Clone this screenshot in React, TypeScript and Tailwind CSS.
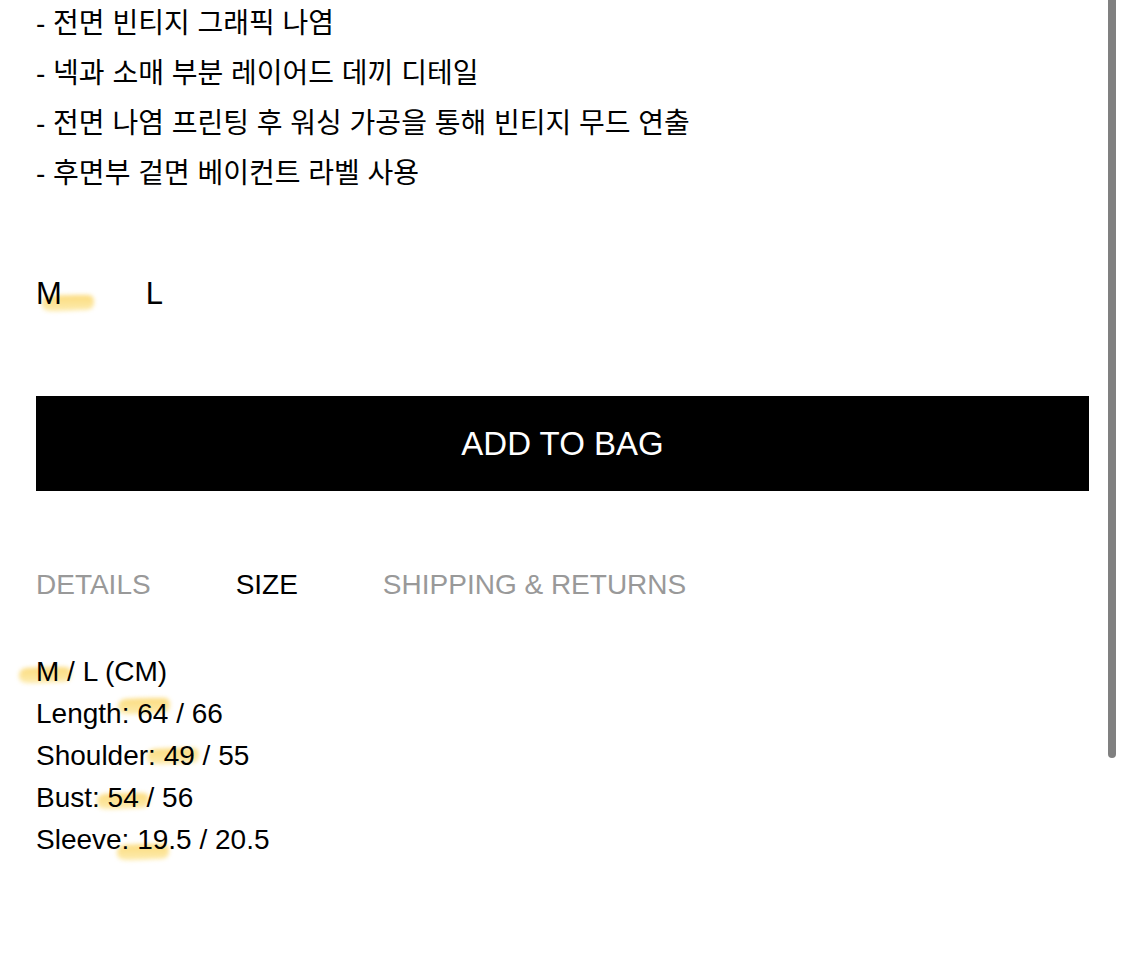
import { useState } from 'react'
import clsx from 'clsx'

const features = [
  '전면 빈티지 그래픽 나염',
  '넥과 소매 부분 레이어드 데끼 디테일',
  '전면 나염 프린팅 후 워싱 가공을 통해 빈티지 무드 연출',
  '후면부 겉면 베이컨트 라벨 사용',
]

const tabs = ['DETAILS', 'SIZE', 'SHIPPING & RETURNS']

const measurements = [
  { label: '', marked: 'M', rest: ' / L (CM)', marker: '-left-[18px] top-[15px]' },
  { label: 'Length: ', marked: '64', rest: ' / 66', marker: '-left-[20px] top-[4px]' },
  { label: 'Shoulder: ', marked: '49', rest: ' / 55', marker: '-left-[18px] top-[12px]' },
  { label: 'Bust: ', marked: '54', rest: ' / 56', marker: '-left-[12px] top-[15px]' },
  { label: 'Sleeve: ', marked: '19', rest: '.5 / 20.5', marker: '-left-[21px] top-[24px]' },
]

// soft highlighter stroke drawn under the text
function Marker({ className }: { className: string }) {
  return (
    <svg
      aria-hidden="true"
      viewBox="0 0 54 18"
      className={clsx('pointer-events-none absolute -z-10 h-[18px] w-[54px] max-w-none overflow-visible', className)}
    >
      <defs>
        <linearGradient id="marker-ink" x1="0" y1="0" x2="0" y2="1">
          <stop offset="0" stopColor="#fbd76e" />
          <stop offset="1" stopColor="#fdeaa8" />
        </linearGradient>
      </defs>
      <path
        d="M8 2 C20 1 38 1 47 1 Q53 1 53 8 Q53 16 45 16 C32 16 20 18 8 17 Q1 16 1 10 Q1 3 8 2Z"
        fill="url(#marker-ink)"
        fillOpacity="0.9"
        className="blur-[2px]"
      />
    </svg>
  )
}

export default function App() {
  const [size, setSize] = useState('M')
  const [activeTab, setActiveTab] = useState('SIZE')

  return (
    <main className="relative isolate min-h-screen bg-white px-9 pt-1 pb-24 font-['Liberation_Sans','Noto_Sans_CJK_KR',sans-serif] text-[28px] text-black">
      <ul className="flex flex-col gap-[10px] leading-10">
        {features.map((feature) => (
          <li key={feature}>- {feature}</li>
        ))}
      </ul>

      <div className="mt-[79px] flex gap-[84px] text-[31px] leading-[42px]">
        {['M', 'L'].map((option) => (
          <button
            key={option}
            type="button"
            aria-pressed={size === option}
            onClick={() => setSize(option)}
            className="relative"
          >
            {option}
            {size === option && <Marker className="top-[21px] left-[5px]" />}
          </button>
        ))}
      </div>

      <button type="button" className="mt-[81px] h-[95px] w-full bg-black text-[33px] text-white">
        ADD TO BAG
      </button>

      <div className="mt-[73px] flex gap-[85px] leading-[42px]">
        {tabs.map((tab) => (
          <button
            key={tab}
            type="button"
            onClick={() => setActiveTab(tab)}
            className={activeTab === tab ? 'text-black' : 'text-[#999999]'}
          >
            {tab}
          </button>
        ))}
      </div>

      <div className="mt-[45px] leading-[42px]">
        {measurements.map((row) => (
          <p key={row.marked}>
            {row.label}
            <span className="relative inline-block">
              {row.marked}
              <Marker className={row.marker} />
            </span>
            {row.rest}
          </p>
        ))}
      </div>

      <div className="absolute top-0 right-[9px] h-[758px] w-2 rounded-b-full bg-[#808080]" />
    </main>
  )
}
